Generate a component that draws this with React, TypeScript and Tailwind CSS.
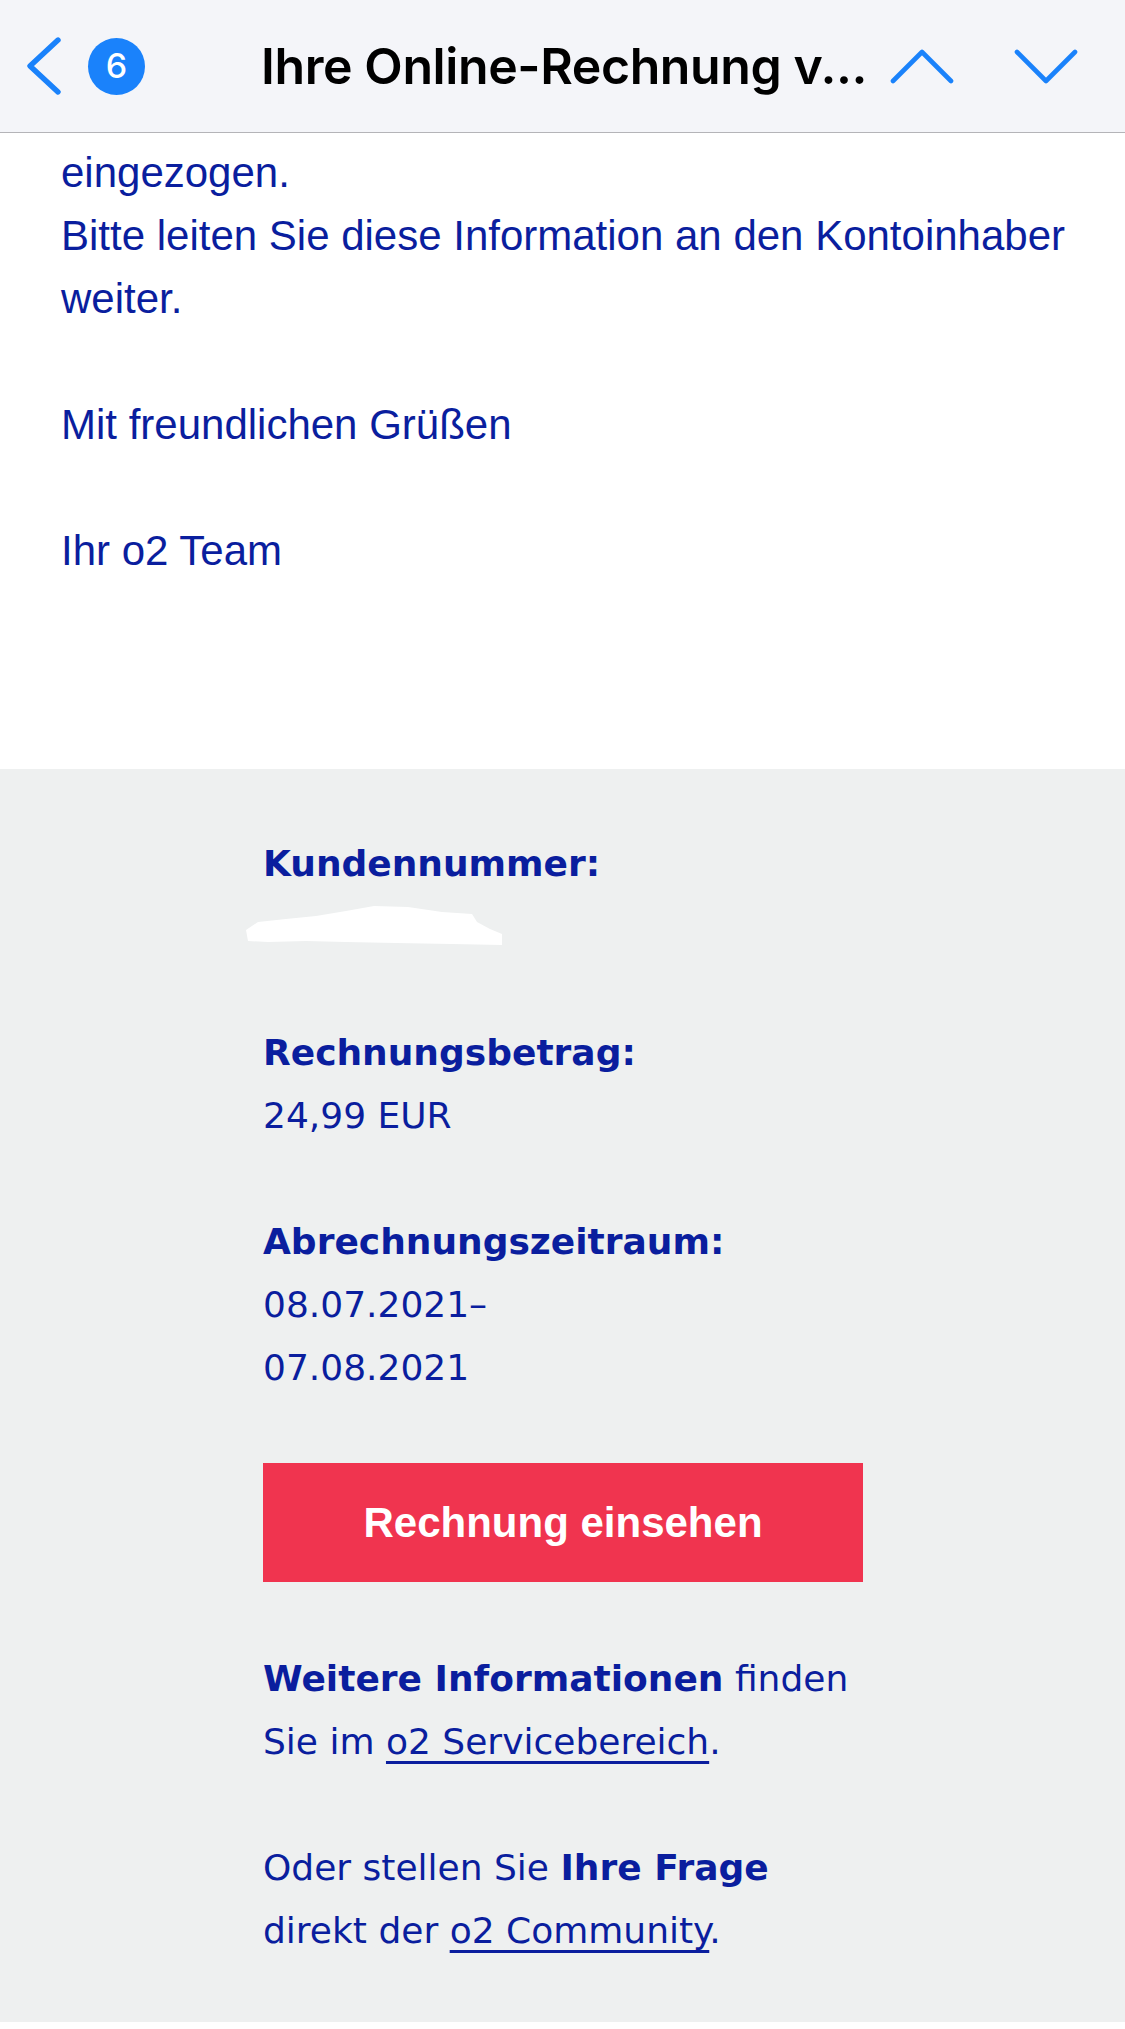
import React from 'react';

const BLUE_TEXT = 'text-[#0a1e9e]';

function NavChevron({ dir }: { dir: 'up' | 'down' }) {
  const points = dir === 'up' ? '3,33 32,4 61,33' : '3,4 32,33 61,4';
  return (
    <svg width="64" height="37" viewBox="0 0 64 37" fill="none">
      <polyline
        points={points}
        stroke="#1a82fb"
        strokeWidth="4.6"
        strokeLinecap="round"
        strokeLinejoin="round"
      />
    </svg>
  );
}

function Header() {
  return (
    <header className="flex h-[133px] shrink-0 items-center border-b border-[#b4b4b8] bg-[#f4f5f9] pl-[25px] pr-[47px]">
      <svg width="38" height="60" viewBox="0 0 38 60" fill="none">
        <polyline
          points="33,4 5,30 33,56"
          stroke="#1a82fb"
          strokeWidth="5.4"
          strokeLinecap="round"
          strokeLinejoin="round"
        />
      </svg>
      <div className="ml-[25px] flex h-[57px] w-[57px] items-center justify-center rounded-full bg-[#1a82fb] font-['Inter',sans-serif] text-[34px] font-medium leading-none text-white">
        6
      </div>
      <h1 className="ml-[116px] min-w-0 flex-1 whitespace-nowrap font-['Inter',sans-serif] text-[50px] font-semibold leading-[60px] tracking-[-0.4px] text-black">
        Ihre Online-Rechnung v...
      </h1>
      <div className="flex items-center gap-[60px]">
        <NavChevron dir="up" />
        <NavChevron dir="down" />
      </div>
    </header>
  );
}

function MessageBody() {
  return (
    <section
      className={`h-[636px] shrink-0 whitespace-nowrap bg-white pl-[61px] pt-[8px] font-['Liberation_Sans',Arial,sans-serif] text-[42px] leading-[63px] ${BLUE_TEXT}`}
    >
      <p>eingezogen.</p>
      <p>Bitte leiten Sie diese Information an den Kontoinhaber</p>
      <p>weiter.</p>
      <p className="h-[63px]" />
      <p>Mit freundlichen Grüßen</p>
      <p className="h-[63px]" />
      <p>Ihr o2 Team</p>
    </section>
  );
}

function Redacted() {
  return (
    <div className="h-[63px] pt-[9px]">
      <svg className="-ml-[17px] block" width="258" height="42" viewBox="0 0 258 42">
        <path
          d="M0 26 L12 18 L40 15 L70 12 L100 7 L128 2 L162 3 L196 8 L226 10 L231 18 L244 25 L256 30 L256 41 L206 40 L150 39 L100 38 L60 37 L22 38 L2 37 Z"
          fill="#ffffff"
        />
      </svg>
    </div>
  );
}

function InvoiceBox() {
  return (
    <section
      className={`h-[1253px] shrink-0 bg-[#eef0f0] pl-[263px] pt-[63px] font-['DejaVu_Sans',Verdana,sans-serif] text-[36px] leading-[63px] ${BLUE_TEXT}`}
    >
      <p className="font-bold">Kundennummer:</p>
      <Redacted />
      <p className="h-[63px]" />
      <p className="font-bold">Rechnungsbetrag:</p>
      <p>24,99 EUR</p>
      <p className="h-[63px]" />
      <p className="font-bold">Abrechnungszeitraum:</p>
      <p>08.07.2021–</p>
      <p>07.08.2021</p>

      <a className="mt-[64px] flex h-[119px] w-[600px] items-center justify-center bg-[#f0344f] font-['Liberation_Sans',Arial,sans-serif] text-[42px] font-bold text-white">
        Rechnung einsehen
      </a>

      <p className="mt-[65px]">
        <span className="font-bold">Weitere Informationen</span> finden
        <br />
        Sie im{' '}
        <a className="underline decoration-[3px] underline-offset-[7px]">o2 Servicebereich</a>.
      </p>
      <p className="h-[63px]" />
      <p>
        Oder stellen Sie <span className="font-bold">Ihre Frage</span>
        <br />
        direkt der{' '}
        <a className="underline decoration-[3px] underline-offset-[7px]">o2 Community</a>.
      </p>
    </section>
  );
}

export default function App() {
  return (
    <div className="flex h-[2029px] w-[1125px] flex-col overflow-hidden bg-white">
      <Header />
      <MessageBody />
      <InvoiceBox />
    </div>
  );
}
